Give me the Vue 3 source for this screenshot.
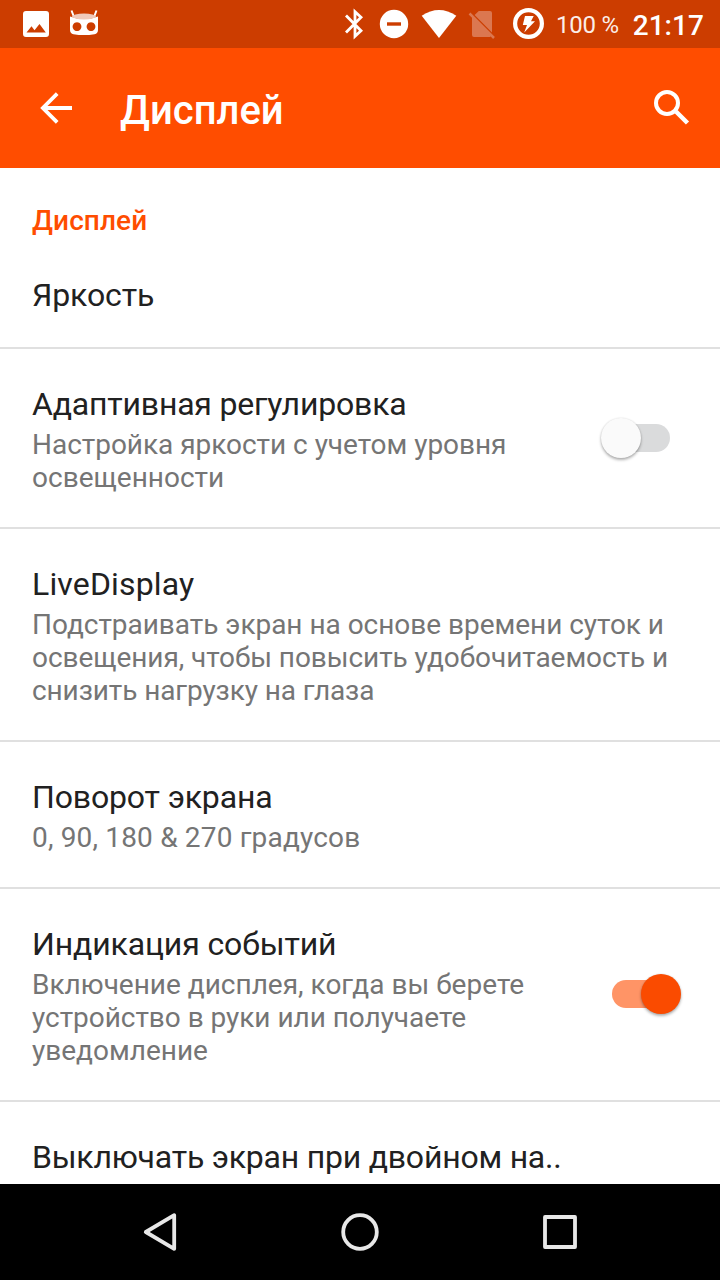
<script setup>
import { reactive } from 'vue'

const rows = reactive([
  { title: 'Яркость', spacing: -0.12, short: true },
  {
    title: 'Адаптивная регулировка',
    spacing: -0.19,
    lines: [
      { text: 'Настройка яркости с учетом уровня', spacing: -0.03 },
      { text: 'освещенности', spacing: 0 },
    ],
    on: false,
  },
  {
    title: 'LiveDisplay',
    spacing: 0.15,
    lines: [
      { text: 'Подстраивать экран на основе времени суток и', spacing: -0.03 },
      { text: 'освещения, чтобы повысить удобочитаемость и', spacing: -0.07 },
      { text: 'снизить нагрузку на глаза', spacing: -0.1 },
    ],
  },
  {
    title: 'Поворот экрана',
    spacing: -0.15,
    lines: [{ text: '0, 90, 180 & 270 градусов', spacing: 0.17 }],
  },
  {
    title: 'Индикация событий',
    spacing: -0.13,
    lines: [
      { text: 'Включение дисплея, когда вы берете', spacing: 0 },
      { text: 'устройство в руки или получаете', spacing: -0.04 },
      { text: 'уведомление', spacing: 0 },
    ],
    on: true,
  },
  { title: 'Выключать экран при двойном на..', spacing: -0.22 },
])

function toggle(row) {
  if (row.on !== undefined) row.on = !row.on
}
</script>

<template>
  <div class="screen">
    <header class="status">
      <svg class="status-icons" width="110" height="48" viewBox="0 0 110 48">
        <path fill="#fff" fill-rule="evenodd" d="M26 11H46a3 3 0 0 1 3 3V34a3 3 0 0 1-3 3H26a3 3 0 0 1-3-3V14a3 3 0 0 1 3-3ZM26.5 32.500H45.800L39.500 24L34.500 30.300L31.500 26.300Z" />
        <path d="M71.500 10.500L74 17M96.500 10.500L94 17" stroke="#fff" stroke-width="2" fill="none" />
        <path fill="#fff" fill-rule="evenodd" d="M70 16.500Q84 21.500 98 16.500V30Q98 33.500 94.500 34.200Q84 36 73.500 34.200Q70 33.500 70 30ZM77 22.200a4.400 4.400 0 1 0 .01 0ZM91 22.200a4.400 4.400 0 1 0 .01 0Z" />
        <ellipse cx="84" cy="16.500" rx="12" ry="2.900" fill="#f0cabb" />
      </svg>
      <svg class="status-icons" width="210" height="48" viewBox="340 0 210 48">
        <path d="M346 15.500L361 30.700L355 36.300V11.700L361 17.300L346 32.500" fill="none" stroke="#fff" stroke-width="2.800" />
        <circle cx="394" cy="24" r="14.200" fill="#fff" />
        <rect x="387" y="22.300" width="14" height="3.400" fill="#cc3d00" />
        <path d="M421.700 15.800Q439 4.200 456.300 15.800L439 38Z" fill="#fff" />
        <path d="M478.800 11H490a2 2 0 0 1 2 2V32.500L474.600 15.100ZM470.400 12.600L494.900 37.100L493.100 38.900L490.700 36.500Q490 37 489 37H474a2 2 0 0 1-2-2V17.800L468.600 14.400Z" fill="#db7750" />
        <circle cx="528.500" cy="23.500" r="13.400" fill="none" stroke="#fff" stroke-width="4.200" />
        <path d="M525 16H533.700L531 21.200H535L524.200 32.500L527 25H522.800Z" fill="#fff" />
      </svg>
      <span class="battery">100 %</span>
      <span class="clock">21:17</span>
    </header>

    <nav class="toolbar">
      <svg class="back" width="36" height="36" viewBox="38 90 36 36">
        <path d="M72 108H44M57.200 93.700L42.900 108L57.200 122.300" fill="none" stroke="#fff" stroke-width="3.800" />
      </svg>
      <h1>Дисплей</h1>
      <svg width="40" height="40" viewBox="652 88 40 40">
        <circle cx="667" cy="103" r="11" fill="none" stroke="#fff" stroke-width="4" />
        <path d="M676 111.500L687.500 123" stroke="#fff" stroke-width="4.500" />
      </svg>
    </nav>

    <main class="list">
      <h2>Дисплей</h2>
      <section v-for="row in rows" :key="row.title" class="row" :class="{ short: row.short }" @click="toggle(row)">
        <div class="copy">
          <div class="title" :style="{ letterSpacing: row.spacing + 'px' }">{{ row.title }}</div>
          <div v-if="row.lines" class="summary">
            <div v-for="line in row.lines" :key="line.text" :style="{ letterSpacing: line.spacing + 'px' }">{{ line.text }}</div>
          </div>
        </div>
        <div v-if="row.on !== undefined" class="switch" :class="{ on: row.on }">
          <div class="track"></div>
          <div class="thumb"></div>
        </div>
      </section>
    </main>

    <footer class="navbar">
      <svg width="720" height="96" viewBox="0 1184 720 96" fill="none" stroke="#e8e8e8" stroke-width="3.800" stroke-linejoin="round">
        <path d="M174.200 1215.200V1248.800L145.800 1232Z" />
        <circle cx="360" cy="1232" r="16.800" />
        <rect x="545" y="1217" width="30" height="30" />
      </svg>
    </footer>
  </div>
</template>

<style>
body { margin: 0; }
</style>

<style scoped>
.screen {
  width: 720px;
  height: 1280px;
  display: flex;
  flex-direction: column;
  overflow: hidden;
  background: #fff;
  font-family: Roboto, "Noto Sans", sans-serif;
}
.status {
  height: 48px;
  flex: none;
  display: flex;
  align-items: center;
  background: #cc3d00;
  color: #fff;
}
.status-icons + .status-icons { margin-left: 230px; }
.battery { margin: 2px 0 0 6px; font-size: 24px; line-height: 28px; letter-spacing: -.25px; white-space: nowrap; color: #fbeee9; }
.clock { margin: 3px 0 0 14px; font-size: 28px; line-height: 33px; font-weight: 500; }
.toolbar {
  height: 120px;
  flex: none;
  display: flex;
  align-items: center;
  box-sizing: border-box;
  padding: 0 28px 0 38px;
  background: #ff4d00;
}
h1 {
  flex: 1;
  margin: 5px 0 0 46px;
  font-size: 40px;
  line-height: 47px;
  font-weight: 500;
  color: #fff;
}
.list { flex: 1; min-height: 0; overflow: hidden; }
h2 {
  margin: 0;
  padding: 36px 32px 0;
  font-size: 28px;
  line-height: 33px;
  font-weight: 500;
  letter-spacing: .1px;
  color: #ff4d00;
}
.row {
  display: flex;
  justify-content: space-between;
  align-items: center;
  padding: 36px 32px 33px;
  border-bottom: 2px solid #e0e0e0;
}
.row.short { padding: 39px 32px 33px; }
.title { font-size: 32px; line-height: 38px; color: #212121; white-space: nowrap; }
.summary { margin-top: 5px; font-size: 28px; line-height: 33px; color: #757575; white-space: nowrap; }
.switch { position: relative; width: 94px; height: 48px; flex: none; }
.track {
  position: absolute;
  left: 18px;
  top: 8px;
  width: 58px;
  height: 28px;
  border-radius: 14px;
  background: #dadbdc;
}
.thumb {
  position: absolute;
  left: 7px;
  top: 2px;
  width: 40px;
  height: 40px;
  border-radius: 50%;
  background: #fafafa;
  box-shadow: 0 2px 3px rgba(0, 0, 0, .3), 0 0 2px rgba(0, 0, 0, .12);
}
.on .track { background: #ff9466; }
.on .thumb { left: 47px; background: #fa4b00; }
.navbar { height: 96px; flex: none; background: #000; }
.navbar svg { display: block; }
</style>
